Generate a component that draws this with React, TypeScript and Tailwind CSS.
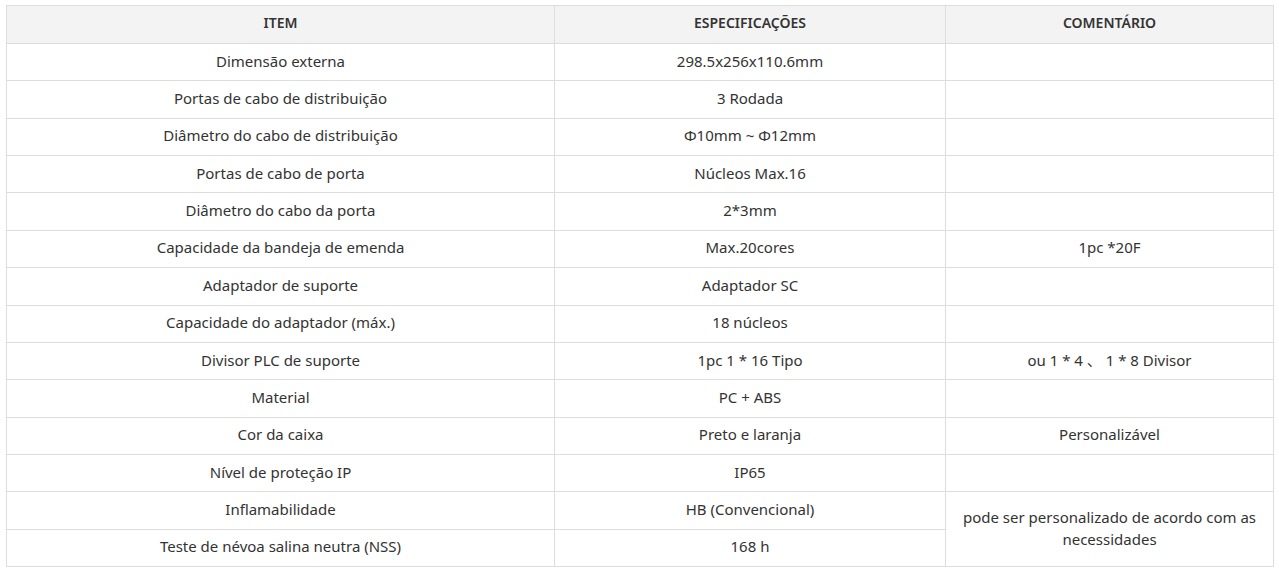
import React from 'react';

interface SpecRow {
  item: string;
  spec: string;
  comment?: string;
  span?: number;
  skip?: boolean;
}

const rows: SpecRow[] = [
  { item: 'Dimensão externa', spec: '298.5x256x110.6mm', comment: '' },
  { item: 'Portas de cabo de distribuição', spec: '3 Rodada', comment: '' },
  { item: 'Diâmetro do cabo de distribuição', spec: 'Φ10mm ~ Φ12mm', comment: '' },
  { item: 'Portas de cabo de porta', spec: 'Núcleos Max.16', comment: '' },
  { item: 'Diâmetro do cabo da porta', spec: '2*3mm', comment: '' },
  { item: 'Capacidade da bandeja de emenda', spec: 'Max.20cores', comment: '1pc *20F' },
  { item: 'Adaptador de suporte', spec: 'Adaptador SC', comment: '' },
  { item: 'Capacidade do adaptador (máx.)', spec: '18 núcleos', comment: '' },
  { item: 'Divisor PLC de suporte', spec: '1pc 1 * 16 Tipo', comment: 'ou 1 * 4 、 1 * 8 Divisor' },
  { item: 'Material', spec: 'PC + ABS', comment: '' },
  { item: 'Cor da caixa', spec: 'Preto e laranja', comment: 'Personalizável' },
  { item: 'Nível de proteção IP', spec: 'IP65', comment: '' },
  { item: 'Inflamabilidade', spec: 'HB (Convencional)', comment: 'pode ser personalizado de acordo com as necessidades', span: 2 },
  { item: 'Teste de névoa salina neutra (NSS)', spec: '168 h', skip: true },
];

const cell = 'border border-[#dddddd] px-2 pb-[3px] text-center align-middle leading-[22px]';

export default function App() {
  return (
    <div className="min-h-[571px] bg-white px-[6px] pt-[5px] font-['Noto_Sans','Noto_Sans_CJK_SC',sans-serif] text-[15px] text-[#333333]">
      <table className="w-[1267px] table-fixed border-collapse border border-[#dddddd]">
        <colgroup>
          <col className="w-[548px]" />
          <col className="w-[391px]" />
          <col className="w-[328px]" />
        </colgroup>
        <thead>
          <tr className="h-[38px] bg-[#f3f3f3]">
            <th className={`${cell} text-[14px] font-semibold`}>ITEM</th>
            <th className={`${cell} text-[14px] font-semibold`}>ESPECIFICAÇÕES</th>
            <th className={`${cell} text-[14px] font-semibold`}>COMENTÁRIO</th>
          </tr>
        </thead>
        <tbody>
          {rows.map((row) => (
            <tr key={row.item} className="h-[37.36px]">
              <td className={cell}>{row.item}</td>
              <td className={cell}>{row.spec}</td>
              {!row.skip && (
                <td className={cell} rowSpan={row.span || 1}>
                  {row.span ? <div className="px-[4px]">{row.comment}</div> : row.comment}
                </td>
              )}
            </tr>
          ))}
        </tbody>
      </table>
    </div>
  );
}
